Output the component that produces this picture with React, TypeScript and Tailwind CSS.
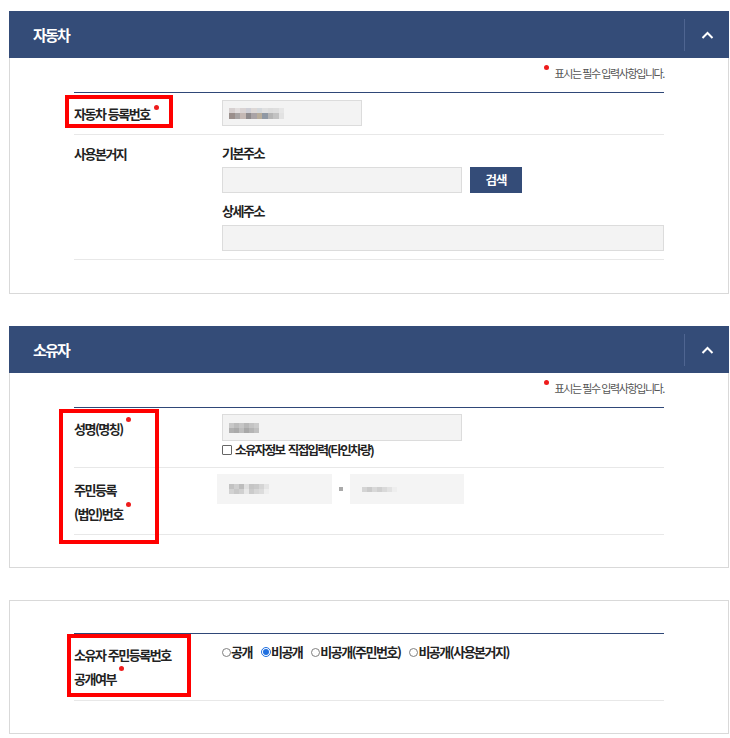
import React from "react";

const Dot = ({ className = "" }: { className?: string }) => (
  <span className={"inline-block shrink-0 w-[5px] h-[5px] rounded-full bg-[#ee1c1c] " + className} />
);

const Header = ({ title }: { title: string }) => (
  <div className="h-[47px] bg-[#344c78] flex items-center">
    <div className="flex-1 pl-[24px] text-white text-[15px] font-bold tracking-[-1.8px] leading-[20px]">{title}</div>
    <div className="w-[45px] h-[32px] border-l border-[#4f6591] flex items-center justify-center">
      <svg width="13" height="8" viewBox="0 0 13 8">
        <path d="M1.5 7 L6.5 2 L11.5 7" stroke="white" strokeWidth="2" fill="none" />
      </svg>
    </div>
  </div>
);

const Notice = () => (
  <div className="h-[34px] flex justify-end items-start pt-[8px]">
    <span className="text-[11px] text-[#555] tracking-[-1.4px] [word-spacing:0.5px] leading-[14px] flex items-start whitespace-pre">
      <Dot className="mr-[6px] mt-[-1px]" />
      표시는 필수 입력사항입니다.
    </span>
  </div>
);

const Cells = ({ colors, size = 5 }: { colors: string[][]; size?: number }) => (
  <div className="flex flex-col blur-[0.6px]">
    {colors.map((row, i) => (
      <div key={i} className="flex">
        {row.map((c, j) => (
          <span key={j} style={{ background: c, width: size, height: size }} />
        ))}
      </div>
    ))}
  </div>
);

const Radio = ({ checked, label }: { checked?: boolean; label: string }) => (
  <span className="flex items-center">
    {checked ? (
      <span className="w-[10px] h-[10px] rounded-full border border-[#1f6fe0] bg-white flex items-center justify-center">
        <span className="w-[6px] h-[6px] rounded-full bg-[#1f6fe0]" />
      </span>
    ) : (
      <span className="w-[9px] h-[9px] rounded-full border border-[#808080] bg-white" />
    )}
    <span>{label}</span>
  </span>
);

const label = "text-[13px] font-bold text-[#222] tracking-[-1.5px] [word-spacing:1px] whitespace-pre";

export default function App() {
  return (
    <div className="bg-white w-[730px] min-h-[738px] pt-[11px] pl-[9px] pr-[1px] font-['Noto_Sans_CJK_KR','Noto_Sans',sans-serif]">
      {/* 자동차 */}
      <section>
        <Header title="자동차" />
        <div className="border border-t-0 border-[#d9d9d9] px-[64px] pb-[33px]">
          <Notice />
          <div className="relative border-t border-[#2f4878]">
            <div className="absolute left-[-9px] top-[2px] w-[108px] h-[33px] border-[4px] border-[#ff0000]" />
            <div className="flex border-b border-[#e8e8e8]">
              <div className={"w-[148px] flex items-center " + label}>
                자동차 등록번호
                <Dot className="ml-[4px] -mt-[12px]" />
              </div>
              <div className="pt-[7px] pb-[8px]">
                <div className="w-[140px] h-[26px] bg-[#f3f3f3] border border-[#dcdcdc] flex items-center pl-[6px]">
                  <Cells
                    colors={[
                      ["#d6d0d0", "#e2dede", "#d9d3d3", "#cfcfd6", "#ddd8d6", "#d4d8dc", "#e0e0e0", "#dcdcdc", "#dedede", "#e6e6e6"],
                      ["#9a8f8c", "#a8a4a4", "#c4b8b4", "#8e8a8c", "#a9a3a6", "#b8ad9c", "#8f98a4", "#b5b5b5", "#c2c2c2", "#e2e2e2"],
                    ]}
                    size={5.5}
                  />
                </div>
              </div>
            </div>
            <div className="flex border-b border-[#e8e8e8]">
              <div className={"w-[148px] pt-[10px] leading-[18px] " + label}>사용본거지</div>
              <div className="flex-1 pt-[9px] pb-[8px]">
                <div className={"leading-[18px] " + label}>기본주소</div>
                <div className="flex mt-[5px] gap-[8px]">
                  <div className="w-[240px] h-[26px] bg-[#f3f3f3] border border-[#dcdcdc]" />
                  <button className="w-[52px] h-[26px] bg-[#344c78] text-white text-[12.5px] font-bold tracking-[-1px]">검색</button>
                </div>
                <div className={"mt-[9px] leading-[18px] " + label}>상세주소</div>
                <div className="mt-[5px] h-[26px] bg-[#f3f3f3] border border-[#dcdcdc]" />
              </div>
            </div>
          </div>
        </div>
      </section>

      {/* 소유자 */}
      <section className="mt-[32px]">
        <Header title="소유자" />
        <div className="border border-t-0 border-[#d9d9d9] px-[64px] pb-[32px]">
          <Notice />
          <div className="relative border-t border-[#2f4878]">
            <div className="absolute left-[-15px] top-[1px] w-[100px] h-[135px] border-[4px] border-[#ff0000]" />
            <div className="flex border-b border-[#e8e8e8]">
              <div className={"w-[148px] pt-[12px] leading-[18px] flex items-start " + label}>
                성명(명칭)
                <Dot className="ml-[3px] -mt-[3px]" />
              </div>
              <div className="pt-[6px] pb-[8px]">
                <div className="w-[240px] h-[27px] bg-[#f3f3f3] border border-[#dcdcdc] flex items-center pl-[6px]">
                  <Cells colors={[["#c8c8c8", "#bcbcbc", "#c6c6c6", "#b8b8b8", "#c4c4c4", "#cccccc"], ["#b0b0b0", "#aaaaaa", "#bdbdbd", "#a8a8a8", "#b4b4b4", "#c0c0c0"]]} />
                </div>
                <div className="flex items-center h-[18px] text-[12.5px] font-bold text-[#222] tracking-[-1.6px] [word-spacing:2px] whitespace-pre">
                  <span className="w-[10px] h-[10px] border border-[#666] rounded-[1px] bg-white mr-[3px]" />
                  소유자정보 직접입력(타인차량)
                </div>
              </div>
            </div>
            <div className="flex border-b border-[#e8e8e8]">
              <div className={"w-[148px] pt-[10px] pb-[8px] leading-[24px] " + label}>
                <div>주민등록</div>
                <div className="flex items-start">
                  (법인)번호
                  <Dot className="ml-[3px] mt-[0px]" />
                </div>
              </div>
              <div className="pt-[6px] flex items-start">
                <div className="-ml-[5px] w-[115px] h-[30px] bg-[#f4f4f4] flex items-center pl-[12px]">
                  <Cells colors={[["#c2c2c2", "#cfcfcf", "#bdbdbd", "#e0e0e0", "#c5c5c5", "#c9c9c9", "#d5d5d5", "#e5e5e5"], ["#d2d2d2", "#c8c8c8", "#d0d0d0", "#e8e8e8", "#cbcbcb", "#d6d6d6", "#dcdcdc", "#eeeeee"]]} />
                </div>
                <div className="w-[18px] h-[30px] flex items-center justify-center">
                  <span className="w-[4px] h-[4px] bg-[#aaaaaa] blur-[0.5px]" />
                </div>
                <div className="w-[114px] h-[30px] bg-[#f4f4f4] flex items-center pl-[12px]">
                  <Cells colors={[["#d4d4d4", "#cacaca", "#d8d8d8", "#cfcfcf", "#d9d9d9", "#e2e2e2", "#eeeeee"]]} />
                </div>
              </div>
            </div>
          </div>
        </div>
      </section>

      {/* 공개여부 */}
      <section className="mt-[32px]">
        <div className="border border-[#d9d9d9] px-[64px] pt-[32px] pb-[32px]">
          <div className="relative border-t border-[#2f4878]">
            <div className="absolute left-[-7px] top-[0px] w-[124px] h-[63px] border-[4px] border-[#ff0000]" />
            <div className="flex border-b border-[#e8e8e8]">
              <div className={"w-[148px] pt-[9px] pb-[9px] leading-[24px] " + label}>
                <div>소유자 주민등록번호</div>
                <div className="flex items-start">
                  공개여부
                  <Dot className="ml-[3px] -mt-[1px]" />
                </div>
              </div>
              <div className="pt-[9px] flex items-center self-start gap-[9px] text-[13px] font-bold text-[#222] tracking-[-1.5px] leading-[18px] whitespace-pre">
                <Radio label="공개" />
                <Radio checked label="비공개" />
                <Radio label="비공개(주민번호)" />
                <Radio label="비공개(사용본거지)" />
              </div>
            </div>
          </div>
        </div>
      </section>
    </div>
  );
}
